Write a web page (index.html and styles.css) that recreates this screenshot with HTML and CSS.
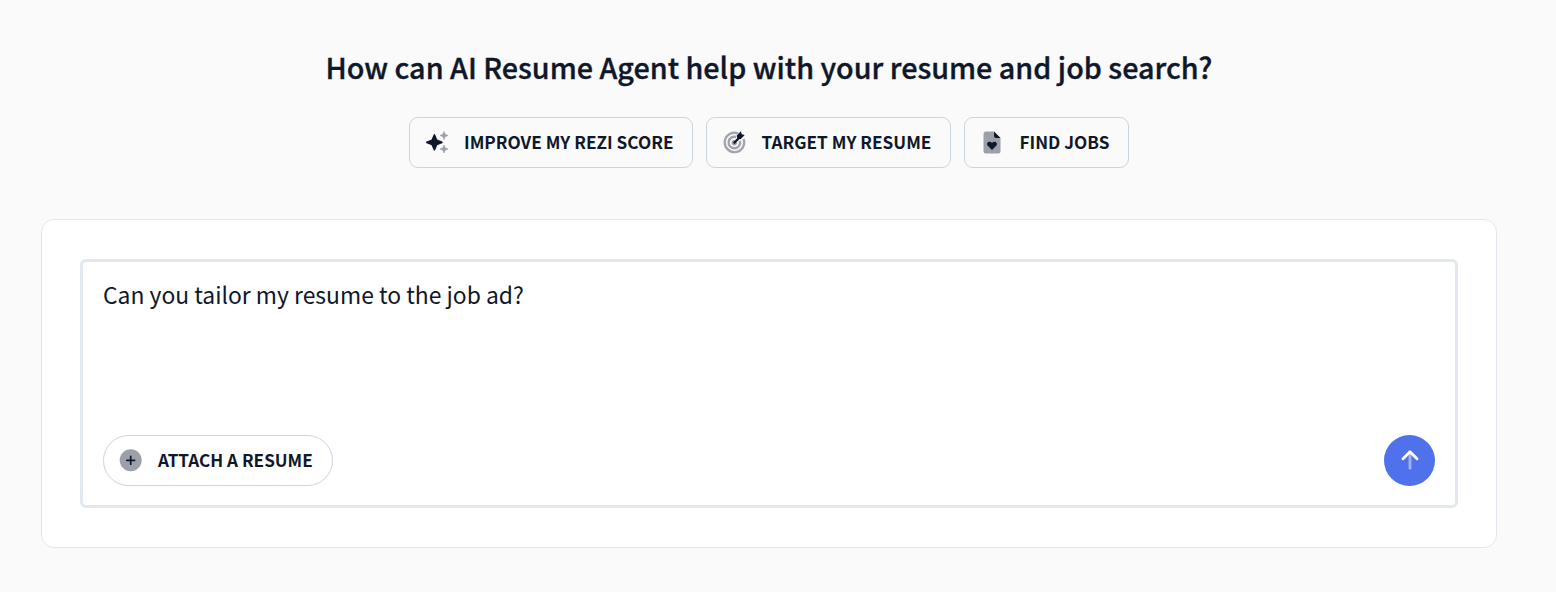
FILE: index.html
```html
<!DOCTYPE html>
<html lang="en">
<head>
<meta charset="utf-8">
<title>AI Resume Agent</title>
<link rel="stylesheet" href="styles.css">
</head>
<body>
<main class="page">
  <h1 class="title">How can AI Resume Agent help with your resume and job search?</h1>
  <div class="actions">
    <button class="action improve">
      <svg class="icon" viewBox="0 0 24 24"><path class="ink" d="M9.400 4Q9.900 4 10.200 4.700L12 9.100Q12.200 9.600 12.700 9.800L17.100 11.600Q17.700 11.800 17.700 12.400T17.100 13.200L12.700 15Q12.200 15.200 12 15.700L10.200 20.100Q9.900 20.700 9.400 20.700T8.600 20.100L6.800 15.700Q6.600 15.200 6.100 15L1.700 13.200Q1 12.900 1 12.400T1.700 11.600L6.100 9.800Q6.600 9.600 6.800 9.100L8.600 4.700Q8.900 4 9.400 4Z"/><path class="soft sparkle" d="M19 1.500L20.200 4.300L23 5.500L20.200 6.700L19 9.500L17.800 6.700L15 5.500L17.800 4.300ZM19 15L20.200 17.800L23 19L20.200 20.200L19 23L17.800 20.200L15 19L17.800 17.800Z"/></svg>
      <span>IMPROVE MY REZI SCORE</span>
    </button>
    <button class="action target">
      <svg class="icon" viewBox="0 0 24 24"><g class="soft-line"><path d="M16.200 3.500A9.700 9.700 0 1 0 21.500 9"/><path d="M14.200 7A5.800 5.800 0 1 0 18 11"/><path d="M12.500 10.900A1.700 1.700 0 1 0 14.100 12.500"/></g><path class="ink-line heavy" d="M12.400 12.600L17.500 7.500"/><path class="ink" d="M15.300 8.700L14.800 5.400L18.900 1.300L19.700 4.300L22.700 5.100L18.600 9.200Z"/></svg>
      <span>TARGET MY RESUME</span>
    </button>
    <button class="action jobs">
      <svg class="icon" viewBox="0 0 24 24"><path class="soft" d="M6 1.500H14L20.500 8V21Q20.500 23.500 18 23.500H6Q3.500 23.500 3.500 21V4Q3.500 1.500 6 1.500Z"/><path class="ink" d="M14 1.500V6Q14 8 16 8H20.500ZM12 19.900L7.800 15.800C6.300 14.200 7.300 11.700 9.300 11.700Q11.200 11.700 12 13.100Q12.800 11.700 14.700 11.700C16.700 11.700 17.700 14.200 16.200 15.800Z"/></svg>
      <span>FIND JOBS</span>
    </button>
  </div>
  <section class="card">
    <div class="composer">
      <p class="prompt">Can you tailor my resume to the job ad?</p>
      <div class="toolbar">
        <button class="attach">
          <svg class="icon" viewBox="0 0 24 24"><circle class="soft" cx="11.700" cy="12.300" r="11"/><path class="ink-line" d="M7.800 12.300H15.600M11.700 8.400V16.200"/></svg>
          <span>ATTACH A RESUME</span>
        </button>
        <button class="send" aria-label="Send"><svg class="arrow" viewBox="0 0 24 24"><path class="shaft" d="M12 5V20.300"/><path class="head" d="M5 10.700L12 3.700L19 10.700"/></svg></button>
      </div>
    </div>
  </section>
</main>
</body>
</html>
```
FILE: styles.css
```css
* { box-sizing: border-box; }
body { margin: 0; background: #fafafa; color: #0f172a; font-family: "Noto Sans CJK SC", sans-serif; }
.page { width: 1456px; margin: 0 0 0 41px; padding-top: 44px; }
.title { margin: 0; height: 46px; line-height: 46px; font-size: 28.74px; font-weight: 500; text-align: center; white-space: nowrap; -webkit-text-stroke: 0.35px #0f172a; }
.actions { display: flex; justify-content: center; gap: 13px; margin-top: 27px; }
button { font: inherit; color: inherit; }
.action, .attach { display: flex; align-items: center; height: 51px; border: 1px solid #cbd5e1; background: transparent; font-size: 17.2px; font-weight: 700; white-space: nowrap; padding: 0 0 2px 15px; gap: 15px; }
.action { border-radius: 9px; }
.improve { width: 284px; }
.target { width: 245px; }
.jobs { width: 165px; }
.target, .jobs { gap: 15.5px; }
.attach { font-size: 17.12px; }
.icon { width: 24px; height: 24px; flex: none; fill: none; }
.ink { fill: #0f172a; }
.soft { fill: #9ca0a8; }
.sparkle { stroke: #9ca0a8; stroke-width: 0.6; stroke-linejoin: round; }
.ink-line { stroke: #0f172a; stroke-width: 1.7; stroke-linecap: round; }
.heavy { stroke-width: 2.3; }
.soft-line { stroke: #a1a4ab; stroke-width: 2.4; }
.card { margin-top: 51px; height: 329px; padding: 39px 38px; border: 1px solid #e2e6f0; border-radius: 13px; background: #fff; }
.composer { height: 249px; display: flex; flex-direction: column; justify-content: space-between; border: 3px solid #e2e8f0; border-radius: 6px; padding: 14px 20px 19px; }
.prompt { margin: 0; font-size: 22.88px; line-height: 37px; }
.toolbar { display: flex; justify-content: space-between; }
.attach { width: 230px; border-radius: 26px; }
.send { display: flex; justify-content: center; align-items: center; width: 51px; height: 51px; padding: 0 0 2px; border: 0; border-radius: 50%; background: #4f71eb; }
.arrow { width: 24px; height: 24px; fill: none; stroke: #fff; stroke-width: 2.9; stroke-linecap: round; stroke-linejoin: round; }
.shaft { opacity: 0.45; }
```
